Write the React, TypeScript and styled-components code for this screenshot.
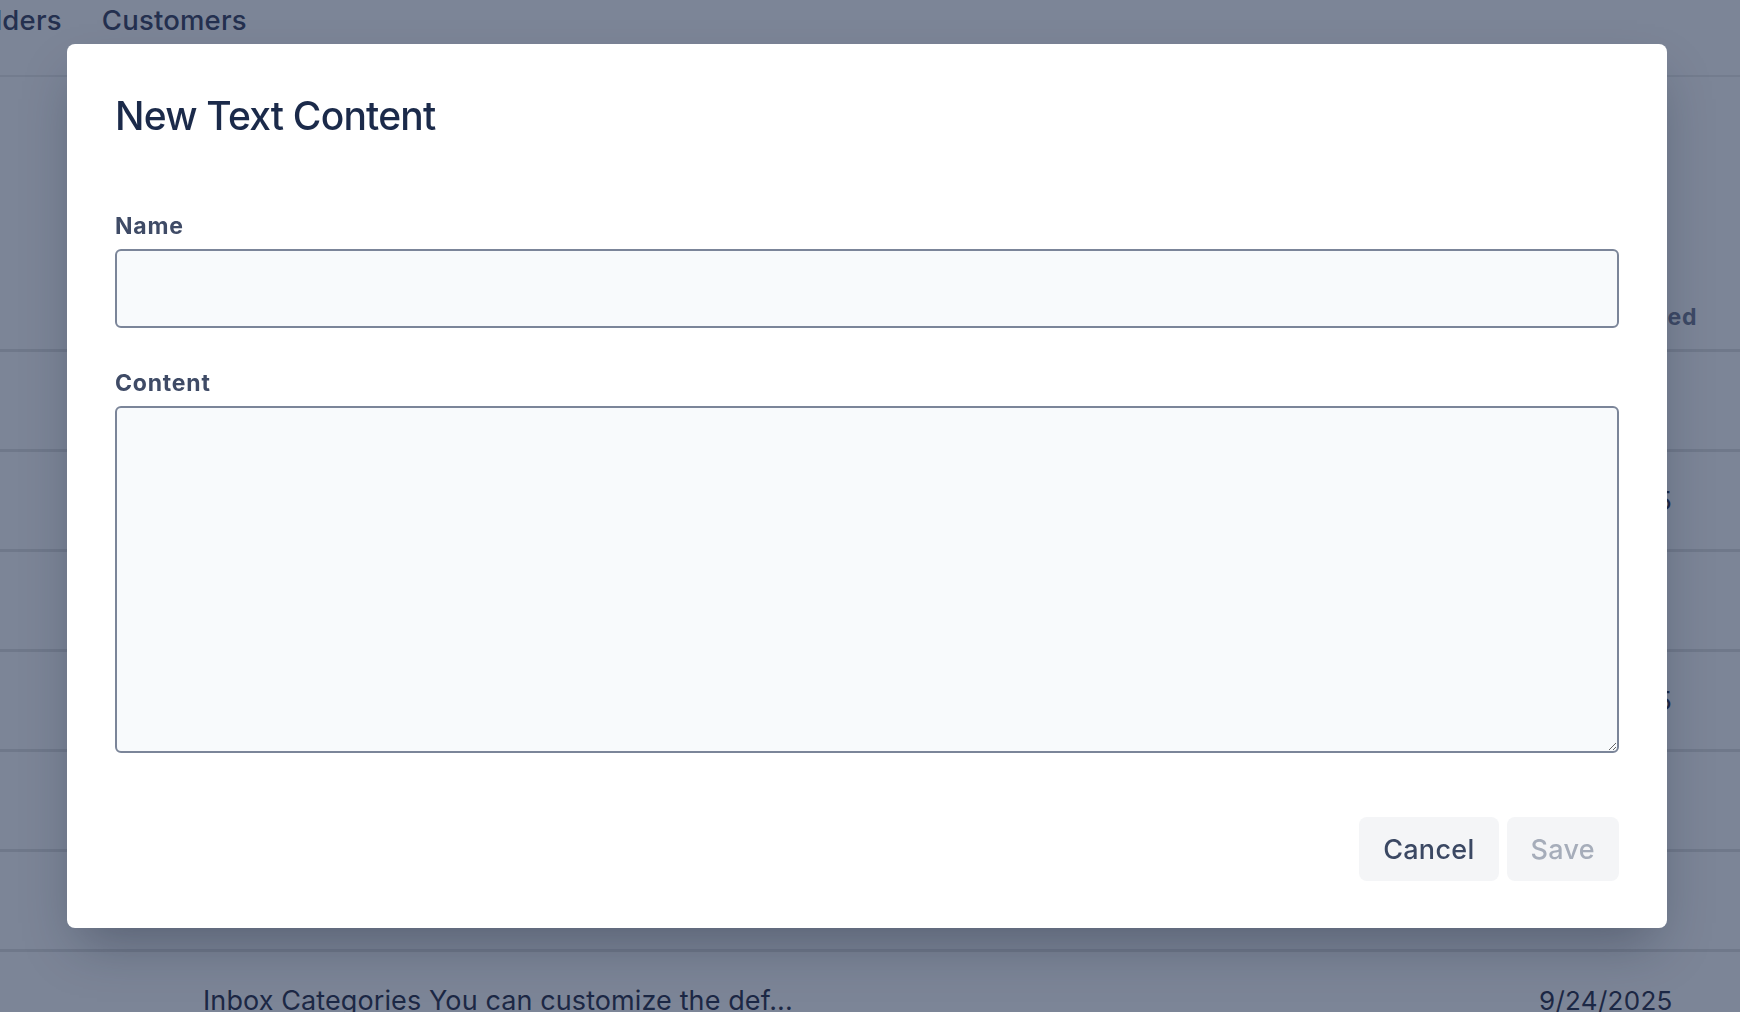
import React from 'react';
import styled, { createGlobalStyle } from 'styled-components';

const GlobalStyle = createGlobalStyle`
    html, body {
        margin: 0;
        padding: 0;
        background: #7c8597;
        font-family: Inter, "Noto Sans", "Liberation Sans", sans-serif;
        overflow: hidden;
    }
    * {
        box-sizing: border-box;
    }
`;

//page behind the dialog
const Page = styled.div`
    width: 1740px;
    height: 1012px;
    display: flex;
    flex-direction: column;
    overflow: hidden;
`;

const NavBar = styled.nav`
    height: 77px;
    flex-shrink: 0;
    display: flex;
    align-items: flex-start;
    gap: 40px;
    border-bottom: 2px solid #737c8e;
`;

const NavTab = styled.a<{ $offset?: number }>`
    margin-left: ${p => p.$offset ?? 0}px;
    font-size: 27.5px;
    font-weight: 500;
    line-height: 40px;
    letter-spacing: 0.2px;
    color: #24304f;
    text-decoration: none;
    white-space: nowrap;
`;

const Toolbar = styled.div`
    height: 200px;
    flex-shrink: 0;
`;

const Row = styled.div<{ $head?: boolean }>`
    display: grid;
    grid-template-columns: 203px 1fr 201px;
    height: ${p => (p.$head ? 75 : 100)}px;
    flex-shrink: 0;
    align-items: ${p => (p.$head ? 'flex-end' : 'center')};
    padding-bottom: ${p => (p.$head ? 16 : 0)}px;
    border-bottom: 3px solid #6f788a;
`;

const HeadCell = styled.div`
    font-size: 23px;
    font-weight: 700;
    line-height: 32px;
    letter-spacing: 0.8px;
    color: #3d4965;
    white-space: nowrap;
`;

const Cell = styled.div<{ $date?: boolean }>`
    font-size: ${p => (p.$date ? 26 : 27)}px;
    letter-spacing: ${p => (p.$date ? 0.3 : 0.1)}px;
    line-height: 40px;
    color: #1c2845;
    white-space: nowrap;
    overflow: hidden;
`;

//dialog
const Overlay = styled.div`
    position: fixed;
    inset: 0;
    display: flex;
    align-items: flex-start;
    padding: 44px 0 0 67px;
`;

const Dialog = styled.div`
    width: 1600px;
    background: #ffffff;
    border-radius: 8px;
    padding: 48px 48px 47px 48px;
    box-shadow: 0 25px 50px -12px rgba(20, 28, 48, 0.35);
    display: flex;
    flex-direction: column;
`;

const Title = styled.h2`
    margin: 0 0 70px 0;
    font-size: 39px;
    font-weight: 500;
    line-height: 48px;
    color: #1b2a4a;
    letter-spacing: -0.8px;
`;

const Field = styled.div<{ $gap?: number }>`
    display: flex;
    flex-direction: column;
    margin-bottom: ${p => p.$gap ?? 0}px;
`;

const Label = styled.label`
    font-size: 23px;
    font-weight: 700;
    line-height: 32px;
    letter-spacing: 0.8px;
    color: #3f4b66;
    margin-bottom: 7px;
`;

const TextInput = styled.input`
    height: 79px;
    width: 100%;
    border: 2px solid #7b8599;
    border-radius: 6px;
    background: #f8fafc;
    padding: 0 18px;
    font: inherit;
    font-size: 24px;
    color: #1b2a4a;
    outline: none;
`;

const TextArea = styled.textarea`
    height: 347px;
    width: 100%;
    border: 2px solid #7b8599;
    border-radius: 6px;
    background: #f8fafc;
    padding: 16px 18px;
    font: inherit;
    font-size: 24px;
    color: #1b2a4a;
    outline: none;
    resize: vertical;
`;

const Footer = styled.div`
    display: flex;
    justify-content: flex-end;
    gap: 8px;
    margin-top: 64px;
`;

const Button = styled.button<{ $disabled?: boolean }>`
    height: 64px;
    padding: 0 24px;
    border: none;
    border-radius: 8px;
    background: #f4f5f7;
    font-family: inherit;
    font-size: 27px;
    font-weight: 500;
    letter-spacing: 0.3px;
    color: ${p => (p.$disabled ? '#a6adba' : '#3b4863')};
    cursor: ${p => (p.$disabled ? 'default' : 'pointer')};
`;

const rows = [
    { name: 'Welcome Message Thanks for reaching out to us...', date: '9/3/2025' },
    { name: 'Shipping Policy Orders are processed within...', date: '9/25/2025' },
    { name: 'Refund Policy If you are not satisfied with...', date: '9/8/2025' },
    { name: 'Out of Office We are currently away and will...', date: '9/25/2025' },
    { name: 'Signature Best regards, The Support Team', date: '9/2/2025' },
    { name: 'Follow Up Just checking in to see if you...', date: '9/1/2025' },
    { name: 'Inbox Categories You can customize the def...', date: '9/24/2025' }
];

const App = () => {
    return (
        <>
            <GlobalStyle />
            <Page>
                <NavBar>
                    <NavTab $offset={-37}>Folders</NavTab>
                    <NavTab>Customers</NavTab>
                </NavBar>
                <Toolbar />
                <Row $head>
                    <HeadCell />
                    <HeadCell>Name</HeadCell>
                    <HeadCell>Last Updated</HeadCell>
                </Row>
                {rows.map(row => (
                    <Row key={row.name}>
                        <Cell />
                        <Cell>{row.name}</Cell>
                        <Cell $date>{row.date}</Cell>
                    </Row>
                ))}
            </Page>

            <Overlay>
                <Dialog role="dialog">
                    <Title>New Text Content</Title>
                    <Field $gap={39}>
                        <Label htmlFor="name">Name</Label>
                        <TextInput id="name" type="text" />
                    </Field>
                    <Field>
                        <Label htmlFor="content">Content</Label>
                        <TextArea id="content" />
                    </Field>
                    <Footer>
                        <Button>Cancel</Button>
                        <Button $disabled>Save</Button>
                    </Footer>
                </Dialog>
            </Overlay>
        </>
    );
};

export default App;
